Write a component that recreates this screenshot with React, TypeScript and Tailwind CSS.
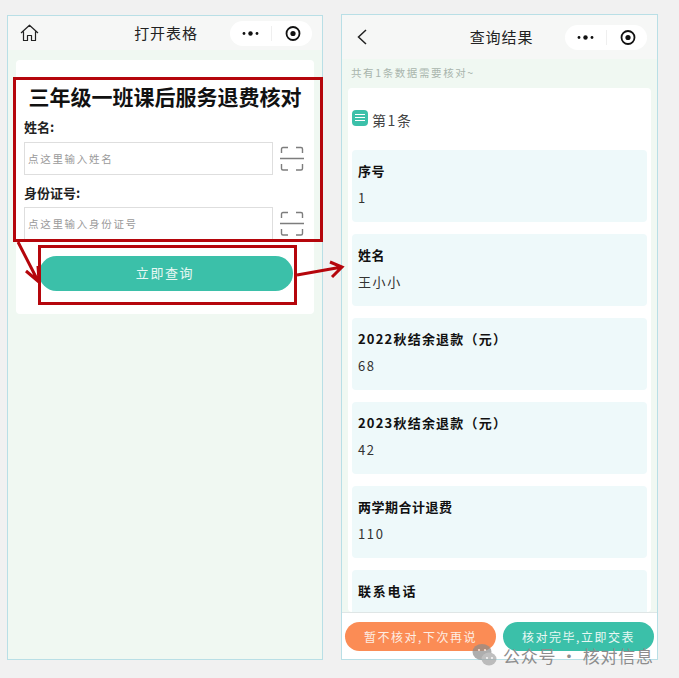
import React from 'react';

const cjk = { fontFamily: '"Noto Sans CJK SC", "Noto Sans", sans-serif' };

const MenuPill = () => (
  <div className="w-[82px] h-[25px] rounded-full bg-white flex items-center justify-self-end">
    <svg width="41" height="25" viewBox="0 0 41 25">
      <circle cx="14" cy="12.5" r="1.4" fill="#111" />
      <circle cx="20.5" cy="12.5" r="2.2" fill="#111" />
      <circle cx="27" cy="12.5" r="1.4" fill="#111" />
    </svg>
    <div className="w-px h-[15px] bg-[#efefef]" />
    <svg width="40" height="25" viewBox="0 0 40 25">
      <circle cx="21" cy="12.5" r="6.5" fill="none" stroke="#111" strokeWidth="1.8" />
      <circle cx="21" cy="12.5" r="2.6" fill="#111" />
    </svg>
  </div>
);

const ScanIcon = () => (
  <svg width="24" height="26" viewBox="0 0 24 26" fill="none" stroke="#7d7d7d" strokeWidth="1.4" className="shrink-0">
    <path d="M1.5 7V3Q1.5 1.5 3 1.5H8M16 1.5H21Q22.5 1.5 22.5 3V7M0 12.5H24M1.5 18V22.5Q1.5 24 3 24H8M16 24H21Q22.5 24 22.5 22.5V18" />
  </svg>
);

const Field = ({ label, value, labelClass = 'tracking-[0.5px]' }: { label: string; value: string; labelClass?: string }) => (
  <div className="h-[72px] shrink-0 bg-[#eef9fa] rounded-sm px-[6px] pt-[11px]">
    <div className={`text-[13px] leading-[20px] font-bold text-[#111] ${labelClass}`}>{label}</div>
    <div className="mt-[7px] text-[13px] leading-[20px] text-[#333] tracking-[1.6px]">{value}</div>
  </div>
);

export default function App() {
  return (
    <div className="relative w-[679px] h-[678px] overflow-hidden bg-[#f1f1f1] flex items-start pt-[15px] pl-[7px] gap-[18px]" style={cjk}>
      {/* left phone */}
      <div className="w-[316px] h-[645px] border border-[#b9dfe6] bg-[#f0f8f2] flex flex-col shrink-0">
        <div className="h-[34px] bg-[#f6f7f6] grid grid-cols-[1fr_auto_1fr] items-center pl-[12px] pr-[10px] shrink-0">
          <svg width="19" height="18" viewBox="0 0 19 18" fill="none" stroke="#222" strokeWidth="1.2">
            <path d="M1 9 9.5 1.2 18 9M3.5 7.5V16.5H7.5V11.5H11.5V16.5H15.5V7.5" strokeLinejoin="round" />
          </svg>
          <div className="text-center text-[15px] leading-[20px] text-[#222] tracking-[0.9px]">打开表格</div>
          <MenuPill />
        </div>
        <div className="mt-[10px] mx-[8px] h-[254px] bg-white rounded-sm px-[8px] pt-[23px] flex flex-col">
          <div className="text-center text-[21px] leading-[26px] font-bold text-[#111] whitespace-nowrap -mx-[8px]">三年级一班课后服务退费核对</div>
          <div className="mt-[8px] text-[13px] leading-[20px] font-bold text-[#222]">姓名:</div>
          <div className="mt-[5px] flex items-center gap-[7px]">
            <div className="w-[249px] h-[33px] border border-[#dedede] flex items-center pl-[3px] text-[10.5px] text-[#9a9a9a] tracking-[1.7px]">点这里输入姓名</div>
            <ScanIcon />
          </div>
          <div className="mt-[8px] text-[13px] leading-[20px] font-bold text-[#222]">身份证号:</div>
          <div className="mt-[4px] flex items-center gap-[7px]">
            <div className="w-[249px] h-[33px] border border-[#dedede] flex items-center pl-[3px] text-[10.5px] text-[#9a9a9a] tracking-[1.7px]">点这里输入身份证号</div>
            <ScanIcon />
          </div>
          <div className="mt-[16px] ml-[15px] w-[254px] h-[35px] rounded-full bg-[#3bc0a9] flex items-center justify-center pb-[2px] pr-[2px] text-[13px] text-[#e9f8f4] tracking-[1.6px]">立即查询</div>
        </div>
      </div>

      {/* right phone */}
      <div className="w-[317px] h-[646px] -mt-px border border-[#b9dfe6] bg-[#f0f8f2] flex flex-col shrink-0 overflow-hidden">
        <div className="h-[44px] bg-[#f6f7f6] grid grid-cols-[1fr_auto_1fr] items-center pl-[14px] pr-[10px] shrink-0">
          <svg width="12" height="18" viewBox="0 0 12 18" fill="none" stroke="#222" strokeWidth="1.5">
            <path d="M10 2 2.5 9 10 16" />
          </svg>
          <div className="text-center text-[15px] leading-[20px] text-[#222] tracking-[0.9px]">查询结果</div>
          <MenuPill />
        </div>
        <div className="h-[29px] flex items-center pb-[2px] pl-[9px] text-[10.5px] text-[#a9b5ad] tracking-[1.6px] shrink-0">共有1条数据需要核对~</div>
        <div className="mx-[6px] flex-1 min-h-0 bg-white rounded-sm px-[4px] overflow-hidden flex flex-col">
          <div className="h-[62px] flex items-center gap-[4px] shrink-0 pt-[2px]">
            <div className="w-[16px] h-[16px] -mt-[5px] rounded-sm bg-[#3bc0a9] flex flex-col items-center justify-center gap-[2px]">
              <div className="w-[10px] h-px bg-white" />
              <div className="w-[10px] h-px bg-white" />
              <div className="w-[10px] h-px bg-white" />
            </div>
            <div className="text-[14px] leading-[20px] text-[#444] tracking-[1.6px]">第1条</div>
          </div>
          <div className="flex flex-col gap-[12px]">
            <Field label="序号" value="1" />
            <Field label="姓名" value="王小小" />
            <Field label="2022秋结余退款（元）" value="68" labelClass="tracking-[1.2px]" />
            <Field label="2023秋结余退款（元）" value="42" labelClass="tracking-[1.2px]" />
            <Field label="两学期合计退费" value="110" />
            <Field label="联系电话" value="" labelClass="tracking-[1.8px]" />
          </div>
        </div>
        <div className="h-[47px] shrink-0 bg-white border-t border-[#dfe6e6] flex items-start justify-between px-[3px] pt-[9px]">
          <div className="w-[151px] h-[29px] rounded-full bg-[#fb8c55] flex items-center justify-center text-[12px] text-[#fdeee4] tracking-[1.5px]">暂不核对,下次再说</div>
          <div className="w-[151px] h-[29px] rounded-full bg-[#3bc0a9] flex items-center justify-center text-[12px] text-[#e9f8f4] tracking-[1.5px]">核对完毕,立即交表</div>
        </div>
      </div>

      {/* red annotations */}
      <div className="absolute left-[13px] top-[77px] w-[310px] h-[165px] border-[3px] border-[#b5060c]" />
      <div className="absolute left-[38px] top-[245px] w-[259px] h-[60px] border-[3px] border-[#b5060c]" />
      <svg className="absolute left-0 top-0" width="679" height="678" viewBox="0 0 679 678" fill="none" stroke="#b5060c" strokeWidth="3">
        <path d="M18 242 38 281M26 271 39 282 38 266" />
        <path d="M297 275 342 267M330 262 342 267 332 277" />
      </svg>

      {/* watermark */}
      <div className="absolute left-[472px] top-[642px] flex items-center gap-[6px] text-[#8d8d8d]">
        <svg width="25" height="24" viewBox="0 0 25 24" className="opacity-70">
          <ellipse cx="10" cy="9" rx="9.5" ry="8" fill="#8c8c8c" />
          <ellipse cx="17" cy="16" rx="7.5" ry="6.5" fill="#a5a5a5" />
          <circle cx="7" cy="7" r="1.1" fill="#fff" />
          <circle cx="13" cy="7" r="1.1" fill="#fff" />
          <circle cx="15" cy="15" r="0.9" fill="#fff" />
          <circle cx="20" cy="15" r="0.9" fill="#fff" />
        </svg>
        <div className="text-[17px] leading-[24px] tracking-[0.7px] whitespace-nowrap mt-[2px]">公众号 · 核对信息</div>
      </div>
    </div>
  );
}
